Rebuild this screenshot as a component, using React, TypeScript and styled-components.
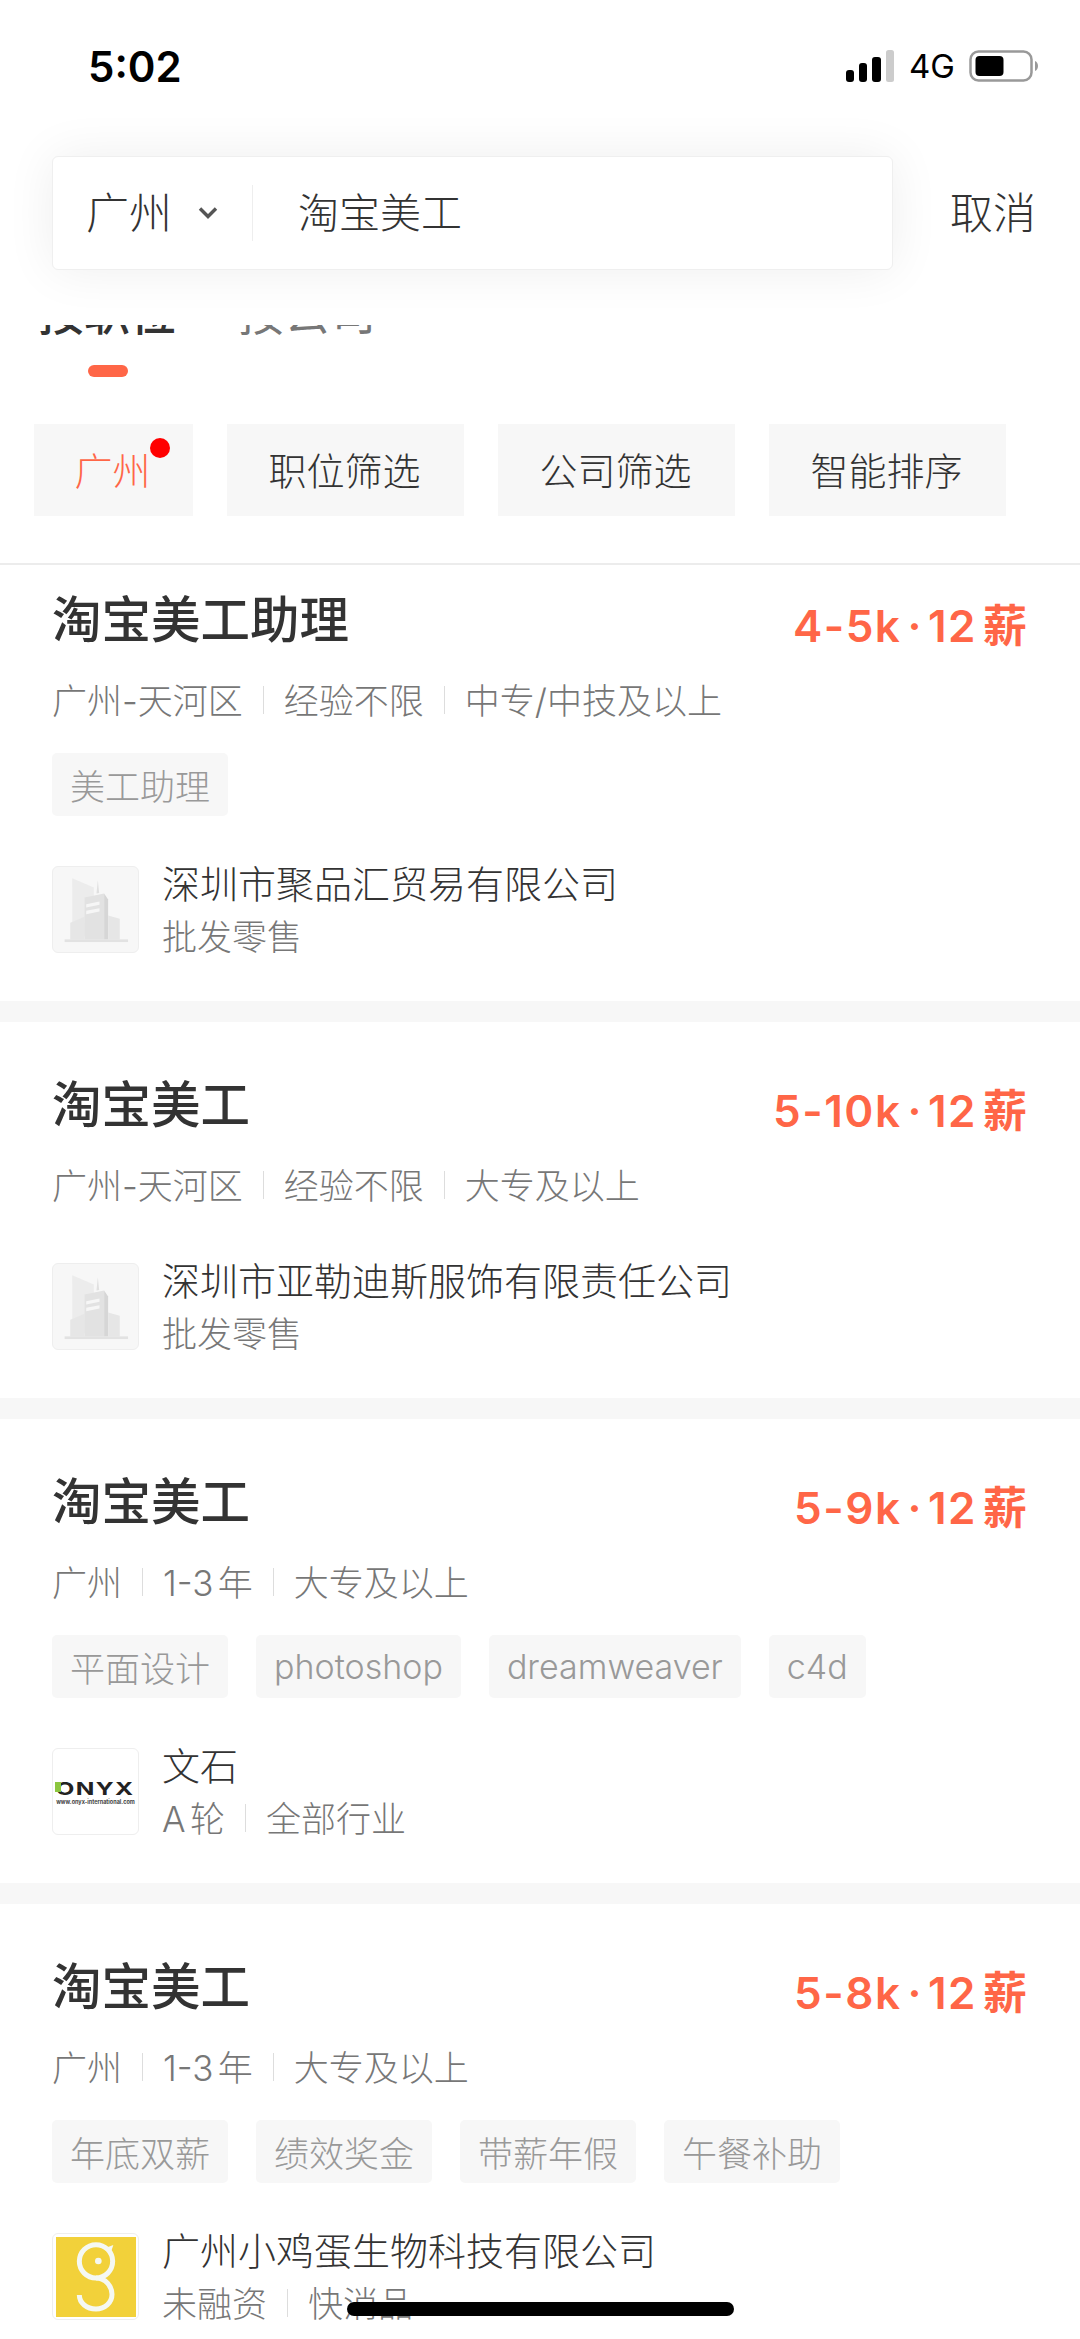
import { ReactElement } from "react";
import styled, { createGlobalStyle } from "styled-components";

interface IJob {
  title: string;
  range: string;
  meta: string[];
  tags: string[];
  company: string;
  sub: string[];
  logo: "building" | "onyx" | "chick";
}

const jobs: IJob[] = [
  {
    title: "淘宝美工助理",
    range: "4-5k",
    meta: ["广州-天河区", "经验不限", "中专/中技及以上"],
    tags: ["美工助理"],
    company: "深圳市聚品汇贸易有限公司",
    sub: ["批发零售"],
    logo: "building",
  },
  {
    title: "淘宝美工",
    range: "5-10k",
    meta: ["广州-天河区", "经验不限", "大专及以上"],
    tags: [],
    company: "深圳市亚勒迪斯服饰有限责任公司",
    sub: ["批发零售"],
    logo: "building",
  },
  {
    title: "淘宝美工",
    range: "5-9k",
    meta: ["广州", "1-3年", "大专及以上"],
    tags: ["平面设计", "photoshop", "dreamweaver", "c4d"],
    company: "文石",
    sub: ["A轮", "全部行业"],
    logo: "onyx",
  },
  {
    title: "淘宝美工",
    range: "5-8k",
    meta: ["广州", "1-3年", "大专及以上"],
    tags: ["年底双薪", "绩效奖金", "带薪年假", "午餐补助"],
    company: "广州小鸡蛋生物科技有限公司",
    sub: ["未融资", "快消品"],
    logo: "chick",
  },
];

const filters = ["广州", "职位筛选", "公司筛选", "智能排序"];

const BuildingLogo = (): ReactElement => (
  <svg width="85" height="85" viewBox="0 0 256 256">
    <path d="M58 34 L123 62 V210 H58 Z" fill="#ececec" />
    <path d="M52 168 L95 150 V218 H52 Z" fill="#e6e6e6" />
    <path d="M95 92 L154 80 V218 H95 Z" fill="#e2e2e2" />
    <path d="M154 80 L166 98 V218 H154 Z" fill="#d6d6d6" />
    <path d="M166 146 L201 156 V218 H166 Z" fill="#e6e6e6" />
    <path d="M131 80 L135 40 L139 78 Z" fill="#e0e0e0" />
    <path d="M100 112 L140 104 V114 L100 122 Z M100 132 L140 124 V134 L100 142 Z" fill="#f6f6f6" />
    <rect x="35" y="218" width="191" height="8" fill="#e2e2e2" />
  </svg>
);

const ChickLogo = (): ReactElement => (
  <svg width="80" height="80" viewBox="0 0 240 240">
    <rect width="240" height="240" fill="#f2d13a" />
    <circle cx="120" cy="73" r="50" fill="none" stroke="#f5f8f2" strokeWidth="15" />
    <path d="M150 32 L172 24 L164 48 Z" fill="#f5f8f2" />
    <circle cx="127" cy="72" r="10" fill="#f5f8f2" />
    <path d="M120 123 C150 123 168 150 168 172 C168 198 146 216 120 216 C92 216 70 198 70 174" fill="none" stroke="#f5f8f2" strokeWidth="15" />
  </svg>
);

const OnyxLogo = (): ReactElement => (
  <OnyxWrap>
    <OnyxMark />
    <OnyxName>ONYX</OnyxName>
    <OnyxUrl>www.onyx-international.com</OnyxUrl>
  </OnyxWrap>
);

const App = (): ReactElement => {
  return (
    <Page>
      <GlobalStyle />
      <StatusBar>
        <Time>5:02</Time>
        <StatusRight>
          <svg width="50" height="32" viewBox="0 0 50 32">
            <rect x="1" y="20" width="8" height="12" rx="3" fill="#000" />
            <rect x="14" y="13" width="8" height="19" rx="3" fill="#000" />
            <rect x="27" y="7" width="9" height="25" rx="3" fill="#000" />
            <rect x="41" y="0" width="8" height="32" rx="2.5" fill="#ccc" />
          </svg>
          <NetLabel>4G</NetLabel>
          <svg width="71" height="32" viewBox="0 0 71 32">
            <rect x="1.5" y="1.5" width="61" height="29" rx="8" fill="none" stroke="#999" strokeWidth="2.5" />
            <rect x="6.5" y="6" width="28" height="20" rx="4" fill="#000" />
            <path d="M66 11 C70 12.5 70 19.5 66 21 Z" fill="#999" />
          </svg>
        </StatusRight>
      </StatusBar>
      <SearchRow>
        <SearchBox>
          <CityText>广州</CityText>
          <svg width="20" height="14" viewBox="0 0 20 14">
            <path d="M2 2.5 L10 10.5 L18 2.5" fill="none" stroke="#555" strokeWidth="3.4" />
          </svg>
          <SearchDivider />
          <SearchText>淘宝美工</SearchText>
        </SearchBox>
        <Cancel>取消</Cancel>
      </SearchRow>
      <TabClip>
        <TabText $active>按职位</TabText>
        <TabText>按公司</TabText>
      </TabClip>
      <TabBar />
      <FilterRow>
        {filters.map((name, i) => (
          <FilterChip key={name} $active={i === 0} $narrow={i === 0}>
            {name}
            {i === 0 && <RedDot />}
          </FilterChip>
        ))}
      </FilterRow>
      <List>
        {jobs.map((job, i) => (
          <Card key={job.company} $first={i === 0}>
            <TitleRow>
              <Title>{job.title}</Title>
              <Salary>
                {job.range}
                <SalaryDot>·</SalaryDot>
                12
                <SalaryUnit>薪</SalaryUnit>
              </Salary>
            </TitleRow>
            <Meta>
              {job.meta.map((m) => (
                <MetaItem key={m}>{m}</MetaItem>
              ))}
            </Meta>
            {job.tags.length > 0 && (
              <Tags>
                {job.tags.map((t) => (
                  <Tag key={t} $latin={/^[a-z0-9]+$/i.test(t)}>
                    {t}
                  </Tag>
                ))}
              </Tags>
            )}
            <Company $afterTags={job.tags.length > 0}>
              <LogoBox $tint={job.logo === "building"}>
                {job.logo === "building" && <BuildingLogo />}
                {job.logo === "onyx" && <OnyxLogo />}
                {job.logo === "chick" && <ChickLogo />}
              </LogoBox>
              <CompanyInfo>
                <CompanyName>{job.company}</CompanyName>
                <CompanySub>
                  {job.sub.map((s) => (
                    <MetaItem key={s}>{s}</MetaItem>
                  ))}
                </CompanySub>
              </CompanyInfo>
            </Company>
          </Card>
        ))}
      </List>
      <HomeIndicator />
    </Page>
  );
};

export default App;

const GlobalStyle = createGlobalStyle`
  html, body {
    margin: 0;
    padding: 0;
    background: #fff;
  }
  * {
    box-sizing: border-box;
  }
`;

const Page = styled.div`
  position: relative;
  width: 1080px;
  height: 2339px;
  overflow: hidden;
  background: #fff;
  font-family: Inter, "Noto Sans CJK SC", sans-serif;
  text-autospace: normal;
  color: #333;
`;

const StatusBar = styled.div`
  display: flex;
  justify-content: space-between;
  align-items: center;
  height: 132px;
  padding: 0 40px 0 88px;
`;

const Time = styled.div`
  font-size: 42px;
  font-weight: 600;
  color: #000;
`;

const StatusRight = styled.div`
  display: flex;
  align-items: center;
  gap: 14px;
`;

const NetLabel = styled.span`
  font-size: 33px;
  color: #000;
`;

const SearchRow = styled.div`
  position: relative;
  display: flex;
  align-items: center;
  margin-top: 24px;
  padding-left: 52px;
`;

const SearchBox = styled.div`
  display: flex;
  align-items: center;
  width: 841px;
  height: 114px;
  padding-left: 33px;
  background: #fff;
  border: 1px solid #efefef;
  border-radius: 6px;
  box-shadow: 0 0 50px rgba(0, 0, 0, 0.07);
`;

const CityText = styled.span`
  width: 112px;
  padding-bottom: 6px;
  font-size: 43px;
  font-weight: 300;
`;

const SearchDivider = styled.div`
  width: 1px;
  height: 56px;
  margin-left: 34px;
  background: #eee;
`;

const SearchText = styled.span`
  margin-left: 45px;
  padding-bottom: 6px;
  font-size: 41px;
  font-weight: 300;
`;

const Cancel = styled.span`
  margin-left: 57px;
  padding-bottom: 6px;
  font-size: 43px;
  font-weight: 300;
`;

const TabClip = styled.div`
  display: flex;
  align-items: flex-end;
  gap: 62px;
  height: 10px;
  margin-top: 55px;
  padding-left: 38px;
  overflow: hidden;
`;

const TabText = styled.span<{ $active?: boolean }>`
  flex: none;
  height: 60px;
  line-height: 60px;
  margin-bottom: -8px;
  font-size: 46px;
  font-weight: ${(p) => (p.$active ? 500 : 400)};
  color: ${(p) => (p.$active ? "#333" : "#777")};
`;

const TabBar = styled.div`
  width: 40px;
  height: 12px;
  margin: 30px 0 0 88px;
  border-radius: 6px;
  background: #ff6647;
`;

const FilterRow = styled.div`
  display: flex;
  gap: 34px;
  margin-top: 47px;
  padding: 0 0 47px 34px;
  border-bottom: 2px solid #ececec;
`;

const FilterChip = styled.div<{ $active: boolean; $narrow: boolean }>`
  position: relative;
  display: flex;
  align-items: center;
  justify-content: center;
  width: ${(p) => (p.$narrow ? 159 : 237)}px;
  height: 92px;
  padding: 0 2px 3px 0;
  background: #f7f7f7;
  font-size: 38px;
  font-weight: 300;
  color: ${(p) => (p.$active ? "#ff6647" : "#333")};
`;

const RedDot = styled.span`
  position: absolute;
  top: 14px;
  right: 23px;
  width: 20px;
  height: 20px;
  border-radius: 50%;
  background: #ff0000;
`;

const List = styled.div`
  display: flex;
  flex-direction: column;
  gap: 21px;
  background: #f7f7f7;
`;

const Card = styled.div<{ $first: boolean }>`
  padding: ${(p) => (p.$first ? 25 : 53)}px 52px 48px;
  background: #fff;
`;

const TitleRow = styled.div`
  display: flex;
  justify-content: space-between;
  height: 60px;
`;

const Title = styled.div`
  font-size: 49.5px;
  font-weight: 500;
  line-height: 60px;
  color: #333;
`;

const Salary = styled.div`
  display: flex;
  margin: 6px 1px 0 0;
  font-size: 44px;
  font-weight: 600;
  line-height: 60px;
  letter-spacing: 1.5px;
  color: #ff6647;
`;

const SalaryDot = styled.span`
  margin: 0 5px 0 6px;
`;

const SalaryUnit = styled.span`
  margin-left: 6px;
  letter-spacing: 0;
`;

const Meta = styled.div`
  display: flex;
  align-items: center;
  height: 50px;
  margin-top: 23px;
  font-size: 35px;
  font-weight: 300;
  color: #777;
`;

const MetaItem = styled.span`
  display: flex;
  align-items: center;
  & + &::before {
    content: "";
    width: 1px;
    height: 28px;
    margin: 4px 20px 0;
    background: #ddd;
  }
`;

const Tags = styled.div`
  display: flex;
  gap: 28px;
  margin-top: 30px;
`;

const Tag = styled.span<{ $latin: boolean }>`
  display: flex;
  align-items: center;
  height: 63px;
  padding: 0 18px;
  border-radius: 5px;
  background: #f7f7f7;
  font-size: ${(p) => (p.$latin ? 34 : 35)}px;
  font-weight: 300;
  color: #999;
`;

const Company = styled.div<{ $afterTags: boolean }>`
  display: flex;
  gap: 23px;
  margin-top: ${(p) => (p.$afterTags ? 50 : 55)}px;
`;

const LogoBox = styled.div<{ $tint: boolean }>`
  display: flex;
  align-items: center;
  justify-content: center;
  flex: none;
  width: 87px;
  height: 87px;
  overflow: hidden;
  border: 1px solid #eee;
  border-radius: 6px;
  background: ${(p) => (p.$tint ? "#f7f7f7" : "#fff")};
`;

const CompanyInfo = styled.div`
  display: flex;
  flex-direction: column;
  height: 87px;
`;

const CompanyName = styled.div`
  margin-top: -4px;
  font-size: 38px;
  font-weight: 300;
  line-height: 44px;
  color: #333;
`;

const CompanySub = styled.div`
  display: flex;
  align-items: center;
  height: 44px;
  margin-top: 6px;
  font-size: 35px;
  font-weight: 300;
  color: #777;
`;

const OnyxWrap = styled.div`
  position: relative;
  display: flex;
  flex-direction: column;
  align-items: center;
  width: 85px;
  padding-top: 2px;
`;

const OnyxMark = styled.span`
  position: absolute;
  z-index: 1;
  top: 5px;
  left: 2px;
  width: 6px;
  height: 10px;
  background: #8cc63f;
`;

const OnyxName = styled.span`
  font-size: 18px;
  font-weight: 700;
  line-height: 20px;
  letter-spacing: 1px;
  color: #222;
  transform: scaleX(1.36);
`;

const OnyxUrl = styled.span`
  margin-top: -1px;
  font-size: 5.5px;
  font-weight: 700;
  line-height: 8px;
  color: #444;
`;

const HomeIndicator = styled.div`
  position: absolute;
  left: 347px;
  bottom: 23px;
  width: 387px;
  height: 14px;
  border-radius: 7px;
  background: #000;
`;
